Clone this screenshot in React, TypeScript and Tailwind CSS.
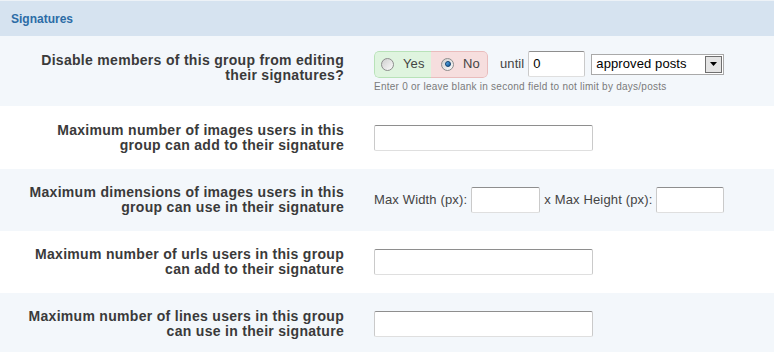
import React from "react";

const font = { fontFamily: '"Liberation Sans", Arial, sans-serif' };

function TextBox({ w, value = "" }: { w: string; value?: string }) {
  return (
    <div
      className={`${w} h-[26px] bg-white border border-[#cacaca] border-t-[#8e8e8e] border-b-[#dfdfdf] rounded-[2px] flex items-center px-[4px] text-[13px] text-black`}
    >
      {value}
    </div>
  );
}

function Radio({ checked }: { checked?: boolean }) {
  return (
    <span className="w-[13px] h-[13px] rounded-full border border-[#8d8d8d] bg-gradient-to-br from-[#cfcfcf] to-[#fbfbfb] flex items-center justify-center">
      {checked && <span className="w-[6px] h-[6px] rounded-full bg-gradient-to-br from-[#5fb4ee] to-[#0d5596] border border-[#0c3f6e]" />}
    </span>
  );
}

function Row({
  label,
  shaded,
  h,
  labelClass = "",
  children,
}: {
  label: string;
  shaded?: boolean;
  h: string;
  labelClass?: string;
  children: React.ReactNode;
}) {
  return (
    <div className={`flex items-center ${h} ${shaded ? "bg-[#f3f7fb]" : "bg-white"}`}>
      <div className={`ml-[24px] w-[320px] text-right font-bold text-[14px] tracking-[0.3px] leading-[15px] text-[#3a3a3a] ${labelClass}`}>
        {label}
      </div>
      <div className="pl-[30px]">{children}</div>
    </div>
  );
}

export default function App() {
  return (
    <div className="w-[774px] h-[352px] overflow-hidden bg-white text-[#333]" style={font}>
      <div className="h-[36px] bg-[#d6e3f0] border-t border-[#edf2f7] flex items-center pl-[11px]">
        <span className="text-[12px] font-bold text-[#2c6ca6]">Signatures</span>
      </div>

      <Row label="Disable members of this group from editing their signatures?" shaded h="h-[70px]" labelClass="mb-[7px]">
        <div className="flex items-center text-[13px] tracking-[0.1px] mt-[1px]">
          <div className="flex h-[27px] w-[114px] rounded-[5px] overflow-hidden">
            <div className="w-[57px] flex items-center bg-[#dff4df] border border-r-0 border-[#b8e2b8] rounded-l-[5px] pl-[6px]">
              <Radio />
              <span className="ml-[9px] text-[#444]">Yes</span>
            </div>
            <div className="w-[57px] flex items-center bg-[#f6dede] border border-l-0 border-[#e9bcbc] rounded-r-[5px] pl-[10px]">
              <Radio checked />
              <span className="ml-[9px] text-[#444]">No</span>
            </div>
          </div>
          <span className="ml-[12px] text-[#444]">until</span>
          <div className="ml-[4px]">
            <TextBox w="w-[57px]" value="0" />
          </div>
          <div className="ml-[6px] w-[133px] h-[21px] border border-[#a9a9a9] bg-white flex items-center justify-between pl-[4px] pr-[1px]">
            <span className="text-black">approved posts</span>
            <span className="w-[17px] h-[17px] bg-[#e4e4e4] border border-[#6f6f6f] flex items-center justify-center">
              <svg width="7" height="4" viewBox="0 0 7 4">
                <path d="M0 0h7L3.5 4z" fill="#000" />
              </svg>
            </span>
          </div>
        </div>
        <div className="mt-[3px] text-[10px] tracking-[0.25px] leading-[12px] text-[#7a7a7a]">
          Enter 0 or leave blank in second field to not limit by days/posts
        </div>
      </Row>

      <Row label="Maximum number of images users in this group can add to their signature" h="h-[63px]">
        <TextBox w="w-[219px]" />
      </Row>

      <Row label="Maximum dimensions of images users in this group can use in their signature" shaded h="h-[62px]">
        <div className="flex items-center text-[13px] tracking-[0.15px] text-[#444]">
          <span>Max Width (px):</span>
          <div className="ml-[4px]">
            <TextBox w="w-[69px]" />
          </div>
          <span className="ml-[4px]">x Max Height (px):</span>
          <div className="ml-[4px]">
            <TextBox w="w-[68px]" />
          </div>
        </div>
      </Row>

      <Row label="Maximum number of urls users in this group can add to their signature" h="h-[62px]">
        <TextBox w="w-[219px]" />
      </Row>

      <Row label="Maximum number of lines users in this group can use in their signature" shaded h="h-[62px]">
        <TextBox w="w-[219px]" />
      </Row>
    </div>
  );
}
